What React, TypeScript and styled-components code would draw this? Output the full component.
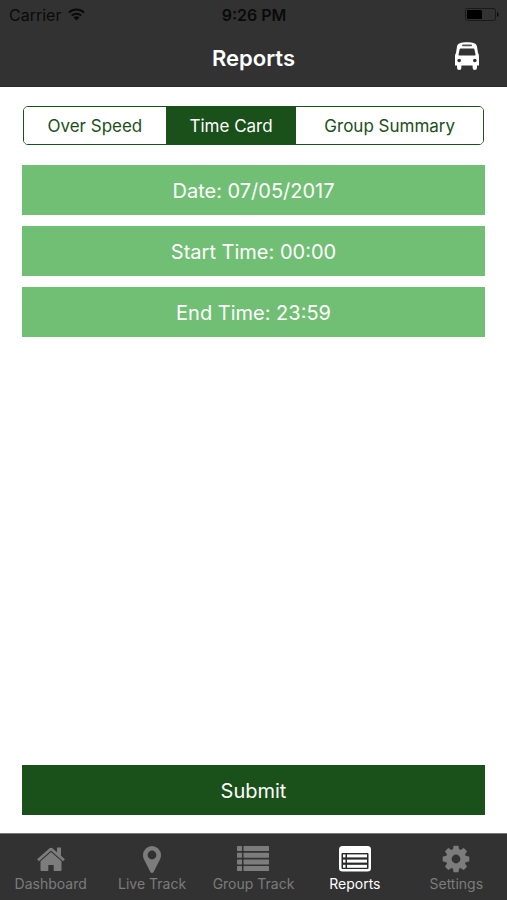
import React, { useState } from "react";
import styled, { createGlobalStyle } from "styled-components";

const GlobalStyle = createGlobalStyle`
  * { box-sizing: border-box; }
  body {
    margin: 0;
    background: #ffffff;
    font-family: Inter, "Liberation Sans", sans-serif;
  }
  button { font-family: inherit; cursor: pointer; }
`;

const Screen = styled.div`
  display: flex;
  flex-direction: column;
  min-height: 100vh;
`;

const Header = styled.header`
  background: #323232;
  border-bottom: 1px solid #2a2a2a;
`;

const StatusBar = styled.div`
  display: grid;
  grid-template-columns: 1fr auto 1fr;
  align-items: center;
  height: 29px;
  padding: 0 8px 0 9px;
  color: #0a0a0a;
  font-size: 16px;
  line-height: 20px;
`;

const Carrier = styled.div`
  display: flex;
  align-items: center;
  gap: 7px;
`;

const Clock = styled.time`
  font-weight: 600;
`;

const Battery = styled.div`
  display: flex;
  justify-content: flex-end;
`;

const NavBar = styled.div`
  display: grid;
  grid-template-columns: 1fr auto 1fr;
  align-items: center;
  height: 57px;
  padding: 0 27px;
  color: #ffffff;
`;

const Title = styled.h1`
  grid-column: 2;
  margin: 0;
  font-size: 22px;
  line-height: 28px;
  font-weight: 600;
`;

const VehicleButton = styled.button`
  justify-self: end;
  display: flex;
  padding: 0 0 4px;
  border: 0;
  background: none;
  color: inherit;
`;

const Main = styled.main`
  flex: 1;
  display: flex;
  flex-direction: column;
  gap: 11px;
  padding: 19px 22px 18px;
`;

const Segments = styled.div`
  display: flex;
  height: 39px;
  margin: 0 1px 9px;
  overflow: hidden;
  border: 1px solid #1a5019;
  border-radius: 5px;
`;

const Segment = styled.button<{ $active: boolean; $share: number }>`
  flex: ${(p) => p.$share} 1 0;
  padding: 0;
  border: 0;
  background: ${(p) => (p.$active ? "#1a5019" : "#ffffff")};
  color: ${(p) => (p.$active ? "#ffffff" : "#1a5019")};
  font-size: 17px;
  line-height: 24px;
  white-space: nowrap;
`;

const WideButton = styled.button<{ $primary?: boolean }>`
  width: 100%;
  height: 50px;
  padding: 2px 0 0;
  border: 0;
  background: ${(p) => (p.$primary ? "#1a5019" : "#71bf74")};
  color: #ffffff;
  font-size: 20px;
  line-height: 26px;
  margin-top: ${(p) => (p.$primary ? "auto" : "0")};
`;

const TabBar = styled.nav`
  display: grid;
  grid-template-columns: repeat(5, 1fr);
  height: 67px;
  background: #323232;
  border-top: 1px solid #777777;
`;

const Tab = styled.a<{ $active?: boolean }>`
  display: flex;
  flex-direction: column;
  align-items: center;
  gap: 1px;
  padding-top: 11px;
  color: ${(p) => (p.$active ? "#ffffff" : "#7c7c7c")};
  font-size: 14px;
  line-height: 20px;
  text-decoration: none;
  white-space: nowrap;
`;

const WifiIcon = () => (
  <svg width="17" height="13" viewBox="0 0 17 13" fill="none" stroke="currentColor" strokeWidth="2" aria-hidden="true">
    <path d="M1 4.6a10.8 10.8 0 0 1 15 0" />
    <path d="M3.7 7.6a6.9 6.9 0 0 1 9.6 0" />
    <path d="M8.5 12.5 5.5 9.6a4.3 4.3 0 0 1 6 0Z" fill="currentColor" stroke="none" />
  </svg>
);

const BatteryIcon = () => (
  <svg width="34" height="13" viewBox="0 0 34 13" aria-hidden="true">
    <rect x="0.5" y="0.5" width="30" height="12" rx="2" fill="none" stroke="#191919" />
    <rect x="2" y="2" width="15" height="9" rx="1" fill="#000000" />
    <path d="M32 4c2.2.8 2.2 4.2 0 5Z" fill="#0c0c0c" />
  </svg>
);

const BusIcon = () => (
  <svg width="26" height="28" viewBox="0 0 26 28" aria-hidden="true">
    <path
      fill="currentColor"
      d="M13 .3C19 .3 22.500 1.500 23 4.500L24 11C24.700 12 25 13 25 14.500V23.500H23V25.700A2.200 2.200 0 0 1 18.600 25.700V23.500H7.400V25.700A2.200 2.200 0 0 1 3 25.700V23.500H1V14.500C1 13 1.300 12 2 11L3 4.500C3.500 1.500 7 .3 13 .3Z"
    />
    <rect x="8" y="2.600" width="10" height="1.600" rx="0.800" fill="#555555" />
    <path fill="#323232" d="M6.600 6.600H19.400Q20.200 6.600 20.400 7.400L21.500 12.600Q21.600 13.500 20.800 13.500H5.200Q4.400 13.500 4.500 12.600L5.600 7.400Q5.800 6.600 6.600 6.600Z" />
    <circle cx="5.200" cy="18.500" r="1.800" fill="#323232" />
    <circle cx="20.800" cy="18.500" r="1.800" fill="#323232" />
  </svg>
);

const HomeIcon = () => (
  <svg width="30" height="28" viewBox="0 0 30 28" aria-hidden="true">
    <path d="M21 2.500h4V13l-4-3.600Z" fill="currentColor" />
    <path d="M2 15.200 13.900 4.700Q15 3.800 16.100 4.700L28 15.200" fill="none" stroke="currentColor" strokeWidth="2.800" />
    <path d="M15 7.100 25.500 16.200V25a1 1 0 0 1-1 1h-6.800v-6h-5.400v6H5.500a1 1 0 0 1-1-1v-8.800Z" fill="currentColor" />
  </svg>
);

const PinIcon = () => (
  <svg width="20" height="28" viewBox="0 0 20 28" aria-hidden="true">
    <path
      fill="currentColor"
      fillRule="evenodd"
      d="M10 1a9 9 0 0 1 9 9c0 2-.5 3.300-1.200 4.700L11.600 27c-.6 1.200-2.600 1.200-3.200 0L2.200 14.700C1.500 13.300 1 12 1 10a9 9 0 0 1 9-9Zm0 4.600a4.400 4.400 0 1 0 0 8.800 4.400 4.400 0 0 0 0-8.800Z"
    />
  </svg>
);

const ListIcon = () => (
  <svg width="32" height="28" viewBox="0 0 32 28" fill="currentColor" aria-hidden="true">
    {[1, 7.7, 14.4, 21.1].map((y) => (
      <React.Fragment key={y}>
        <rect x="0" y={y} width="5" height="5" rx="0.6" />
        <rect x="6.500" y={y} width="25.500" height="5" rx="0.6" />
      </React.Fragment>
    ))}
  </svg>
);

const ReportIcon = () => (
  <svg width="32" height="28" viewBox="0 0 32 28" aria-hidden="true">
    <rect x="0" y="1" width="32" height="25.500" rx="3.500" fill="currentColor" />
    <rect x="2.500" y="8" width="27" height="16" rx="1" fill="#292929" />
    {[9.4, 14.6, 19.8].map((y) => (
      <React.Fragment key={y}>
        <rect x="4" y={y} width="2.500" height="3" fill="#ffffff" />
        <rect x="8" y={y} width="20" height="3" fill="#ffffff" />
      </React.Fragment>
    ))}
  </svg>
);

const GearIcon = () => (
  <svg width="28" height="28" viewBox="0 0 28 28" aria-hidden="true">
    <g fill="currentColor">
      {[0, 45, 90, 135, 180, 225, 270, 315].map((angle) => (
        <path key={angle} d="M10.500 6 11.500 1.200Q11.600.700 12.100.700H15.900Q16.400.700 16.500 1.200L17.500 6Z" transform={`rotate(${angle} 14 14)`} />
      ))}
      <path fillRule="evenodd" d="M14 3.800a10.200 10.200 0 1 0 0 20.400 10.200 10.200 0 0 0 0-20.400Zm0 5.800a4.400 4.400 0 1 1 0 8.800 4.400 4.400 0 0 1 0-8.800Z" />
    </g>
  </svg>
);

const segments = [
  { label: "Over Speed", share: 142 },
  { label: "Time Card", share: 131 },
  { label: "Group Summary", share: 187 },
];

const fields = ["Date: 07/05/2017", "Start Time: 00:00", "End Time: 23:59"];

const tabs = [
  { label: "Dashboard", Icon: HomeIcon },
  { label: "Live Track", Icon: PinIcon },
  { label: "Group Track", Icon: ListIcon },
  { label: "Reports", Icon: ReportIcon },
  { label: "Settings", Icon: GearIcon },
];

export default function App() {
  const [selected, setSelected] = useState("Time Card");

  return (
    <>
      <GlobalStyle />
      <Screen>
        <Header>
          <StatusBar>
            <Carrier>
              Carrier
              <WifiIcon />
            </Carrier>
            <Clock>9:26 PM</Clock>
            <Battery>
              <BatteryIcon />
            </Battery>
          </StatusBar>
          <NavBar>
            <Title>Reports</Title>
            <VehicleButton type="button" aria-label="Vehicles">
              <BusIcon />
            </VehicleButton>
          </NavBar>
        </Header>
        <Main>
          <Segments role="group" aria-label="Report type">
            {segments.map(({ label, share }) => (
              <Segment
                key={label}
                type="button"
                $share={share}
                $active={selected === label}
                aria-pressed={selected === label}
                onClick={() => setSelected(label)}
              >
                {label}
              </Segment>
            ))}
          </Segments>
          {fields.map((field) => (
            <WideButton key={field} type="button">
              {field}
            </WideButton>
          ))}
          <WideButton type="submit" $primary>
            Submit
          </WideButton>
        </Main>
        <TabBar aria-label="Main">
          {tabs.map(({ label, Icon }) => (
            <Tab
              key={label}
              href={`#${label.toLowerCase().replace(" ", "-")}`}
              $active={label === "Reports"}
              aria-current={label === "Reports" ? "page" : undefined}
            >
              <Icon />
              {label}
            </Tab>
          ))}
        </TabBar>
      </Screen>
    </>
  );
}
